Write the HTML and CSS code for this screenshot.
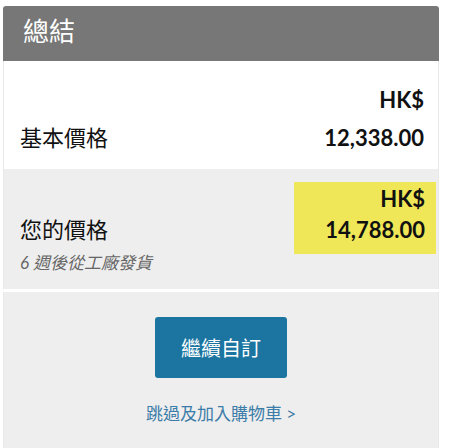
FILE: index.html
```html
<!DOCTYPE html>
<html lang="zh-Hant">
<head>
    <meta charset="UTF-8">
    <meta name="viewport" content="width=device-width, initial-scale=1.0">
    <title>總結</title>
    <link rel="stylesheet" href="styles.css">
</head>
<body>

    <div class="summary">
        <h2 class="summary-title">總結</h2>

        <div class="price-row base">
            <span class="price-label">基本價格</span>
            <div class="price-value">
                <span>HK$</span>
                <span>12,338.00</span>
            </div>
        </div>

        <div class="price-row yours">
            <div class="price-info">
                <span class="price-label">您的價格</span>
                <span class="ship-note">6 週後從工廠發貨</span>
            </div>
            <div class="price-value highlight">
                <span>HK$</span>
                <span>14,788.00</span>
            </div>
        </div>

        <div class="actions">
            <button type="button" class="btn-continue">繼續自訂</button>
            <a href="#" class="skip-link">跳過及加入購物車 &gt;</a>
        </div>
    </div>

</body>
</html>
```

FILE: styles.css
```css
body {
    font-family: Lato, "Noto Sans CJK TC", sans-serif;
    background-color: #fff;
    margin: 0;
    padding: 6px 10px 0 3px;
    color: #111;
}

.summary {
    width: 436px;
}

.summary-title {
    margin: 0;
    height: 55px;
    line-height: 51px;
    padding-left: 20px;
    background-color: #777;
    color: #fff;
    font-size: 26px;
    font-weight: 400;
    border-radius: 3px 3px 0 0;
}

.price-row {
    display: flex;
    justify-content: space-between;
    border-left: 1px solid #e8e8e8;
    border-right: 1px solid #e8e8e8;
}

.price-label {
    font-size: 22px;
}

.price-value {
    display: flex;
    flex-direction: column;
    align-items: flex-end;
    font-size: 22px;
    font-weight: 700;
}

.base {
    align-items: flex-end;
    padding: 20px 14px 12px 16px;
    background-color: #fff;
}

.base .price-label,
.base .price-value {
    line-height: 38px;
}

.yours {
    align-items: flex-start;
    padding: 13px 2px 8px 16px;
    background-color: #eee;
}

.price-info {
    display: flex;
    flex-direction: column;
    padding-top: 32px;
}

.yours .price-label {
    line-height: 31px;
}

.ship-note {
    font-size: 17px;
    font-style: italic;
    color: #666;
    line-height: 36px;
}

.highlight {
    width: 142px;
    box-sizing: border-box;
    padding: 1px 11px 9px 0;
    line-height: 31px;
    background-color: #efe757;
}

.actions {
    display: flex;
    flex-direction: column;
    align-items: center;
    margin-top: 3px;
    padding: 25px 0 40px;
    background-color: #eee;
    border-left: 1px solid #e8e8e8;
    border-right: 1px solid #e8e8e8;
}

.btn-continue {
    width: 132px;
    height: 61px;
    border: none;
    border-radius: 3px;
    background-color: #1b75a0;
    color: #fff;
    font-family: inherit;
    font-size: 20px;
    cursor: pointer;
}

.skip-link {
    margin-top: 22px;
    font-size: 17px;
    color: #3b7ca8;
    text-decoration: none;
}
```
